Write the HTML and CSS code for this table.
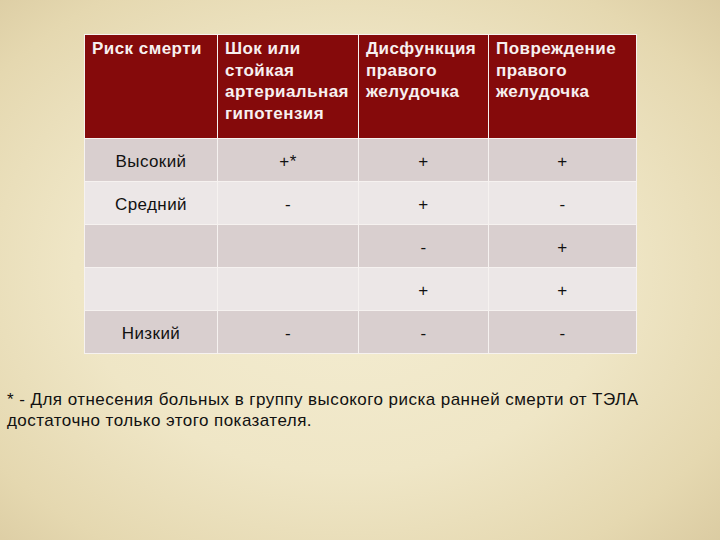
FILE: index.html
```html
<!DOCTYPE html>
<html lang="ru">
<head>
<meta charset="utf-8">
<link rel="stylesheet" href="styles.css">
</head>
<body>
<div class="slide">
  <table class="risk">
    <colgroup>
      <col class="c1"><col class="c2"><col class="c3"><col class="c4">
    </colgroup>
    <thead>
      <tr>
        <th>Риск смерти</th>
        <th>Шок или<br>стойкая<br>артериальная<br>гипотензия</th>
        <th>Дисфункция<br>правого<br>желудочка</th>
        <th>Повреждение<br>правого<br>желудочка</th>
      </tr>
    </thead>
    <tbody>
      <tr class="odd"><td>Высокий</td><td>+*</td><td>+</td><td>+</td></tr>
      <tr class="even"><td>Средний</td><td>-</td><td>+</td><td>-</td></tr>
      <tr class="odd"><td></td><td></td><td>-</td><td>+</td></tr>
      <tr class="even"><td></td><td></td><td>+</td><td>+</td></tr>
      <tr class="odd last"><td>Низкий</td><td>-</td><td>-</td><td>-</td></tr>
    </tbody>
  </table>
  <p class="note">* - Для отнесения больных в группу высокого риска ранней смерти от ТЭЛА достаточно только этого показателя.</p>
</div>
</body>
</html>
```

FILE: styles.css
```css
html, body {
  margin: 0;
  padding: 0;
}
body {
  width: 720px;
  height: 540px;
  overflow: hidden;
  font-family: "Liberation Sans", Arial, sans-serif;
  background:
    radial-gradient(ellipse 75% 75% at 48% 50%, #f4edd2 0%, #efe6c6 50%, #e5d8b0 80%, #d9c99f 100%);
}
.slide {
  padding: 34px 0 0 0;
}
.risk {
  margin-left: 84px;
  width: 552px;
  border-collapse: collapse;
  table-layout: fixed;
}
.c1 { width: 133px; }
.c2 { width: 141px; }
.c3 { width: 130px; }
.c4 { width: 148px; }
.risk th, .risk td {
  border: 1.5px solid #f6f2f0;
}
.risk th {
  background: #850a0b;
  color: #f7f0f0;
  font-weight: bold;
  font-size: 17px;
  letter-spacing: 0.45px;
  line-height: 21.5px;
  text-align: left;
  vertical-align: top;
  height: 104px;
  box-sizing: border-box;
  padding: 3px 2px 0 7px;
  white-space: nowrap;
}
.risk td {
  height: 43px;
  box-sizing: border-box;
  text-align: center;
  vertical-align: middle;
  font-size: 17px;
  letter-spacing: 0.4px;
  color: #111;
  padding: 4px 0 0 0;
}
.risk tr.odd td { background: #d9cfcf; }
.risk tr.even td { background: #ece7e7; }
.note {
  margin: 35px 0 0 7px;
  width: 660px;
  font-size: 17px;
  letter-spacing: 0.45px;
  line-height: 21px;
  color: #111;
}
```
